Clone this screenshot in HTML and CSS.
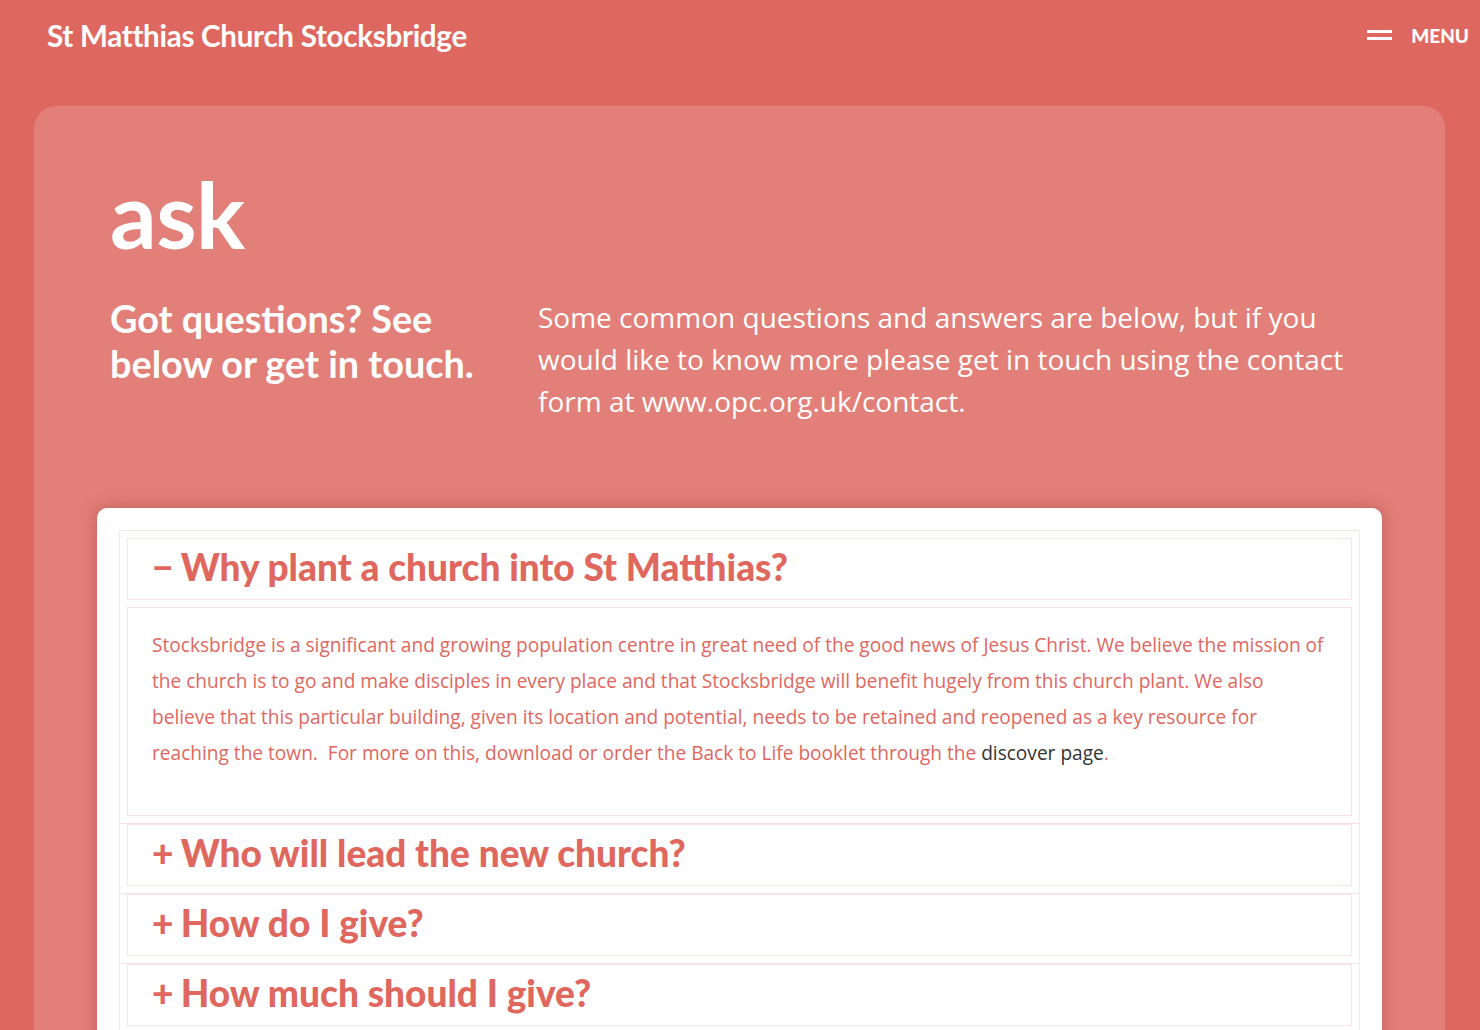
FILE: index.html
```html
<!DOCTYPE html>
<html lang="en">
<head>
<meta charset="utf-8">
<title>ask | St Matthias Church Stocksbridge</title>
<link rel="stylesheet" href="styles.css">
</head>
<body>
<header class="topbar">
  <a class="brand" href="#">St Matthias Church Stocksbridge</a>
  <a class="menu" href="#">
    <svg class="burger" width="25" height="10" viewBox="0 0 25 10" aria-hidden="true">
      <rect x="0" y="0" width="25" height="3" fill="#fff"/>
      <rect x="0" y="7" width="25" height="3" fill="#fff"/>
    </svg>
    <span>MENU</span>
  </a>
</header>

<main class="panel">
  <section class="intro">
    <h1 class="page-title">ask</h1>
    <div class="intro-row">
      <h2 class="lead">Got questions? See below or get in touch.</h2>
      <p class="intro-text">Some common questions and answers are below, but if you would like to know more please get in touch using the contact form at www.opc.org.uk/contact.</p>
    </div>
  </section>

  <section class="card">
    <div class="faq">
      <div class="item first">
        <div class="q"><h3><span class="sign">&minus;</span> Why plant a church into St Matthias?</h3></div>
        <div class="a">
          <p>Stocksbridge is a significant and growing population centre in great need of the good news of Jesus Christ. We believe the mission of the church is to go and make disciples in every place and that Stocksbridge will benefit hugely from this church plant. We also believe that this particular building, given its location and potential, needs to be retained and reopened as a key resource for reaching the town.&nbsp; For more on this, download or order the Back to Life booklet through the <a href="#">discover page</a>.</p>
        </div>
      </div>
      <div class="item">
        <div class="q"><h3><span class="sign">+</span> Who will lead the new church?</h3></div>
      </div>
      <div class="item">
        <div class="q"><h3><span class="sign">+</span> How do I give?</h3></div>
      </div>
      <div class="item">
        <div class="q"><h3><span class="sign">+</span> How much should I give?</h3></div>
      </div>
      <div class="item">
        <div class="q"><h3><span class="sign">+</span> Where will the church meet?</h3></div>
      </div>
    </div>
  </section>
</main>
</body>
</html>
```

FILE: styles.css
```css
* { box-sizing: border-box; }

html, body {
  margin: 0;
  padding: 0;
}

body {
  background: #de6860;
  font-family: "Lato", "Open Sans", sans-serif;
  color: #fff;
}

a { text-decoration: none; }

.topbar {
  display: flex;
  justify-content: space-between;
  align-items: center;
  height: 70px;
  padding: 0 11px 0 47px;
}

.brand {
  color: #fff;
  font-size: 29.6px;
  font-weight: 700;
  letter-spacing: -0.3px;
}

.menu {
  display: flex;
  align-items: center;
  gap: 19px;
  color: #fff;
  font-size: 19px;
  font-weight: 900;
}

.burger { display: block; }

.panel {
  margin: 36px 35px 0 34px;
  background: #e27f78;
  border-radius: 22px 22px 0 0;
  padding: 0 63px 60px;
}

.intro {
  padding: 58px 13px 0;
}

.page-title {
  margin: 0;
  font-size: 92px;
  font-weight: 700;
  line-height: 100px;
  letter-spacing: -0.5px;
}

.intro-row {
  display: grid;
  grid-template-columns: 402px 1fr;
  gap: 26px;
  margin-top: 32px;
}

.lead {
  margin: 0;
  max-width: 395px;
  font-size: 37.8px;
  font-weight: 700;
  line-height: 45px;
}

.intro-text {
  margin: 0;
  font-family: "Open Sans", "Lato", sans-serif;
  font-size: 28px;
  line-height: 42px;
  font-weight: 400;
}

.card {
  margin-top: 86px;
  background: #fff;
  border-radius: 10px;
  padding: 22px 22px 40px;
  box-shadow: 0 0 18px rgba(120, 40, 35, 0.35);
}

.faq {
  border: 1px solid #fae6e4;
  border-bottom: 0;
}

.item {
  border-top: 1px solid #f7e2e0;
  padding: 0 7px 7px;
}

.item.first {
  border-top: 0;
  padding-top: 7px;
}

.q {
  border: 1px solid #f9e6e4;
  padding: 8px 24px 12px;
}

.q h3 {
  margin: 0;
  color: #e0675e;
  font-size: 37px;
  line-height: 40px;
  font-weight: 900;
}

.sign {
  display: inline-block;
  width: 20px;
}

.a {
  margin-top: 7px;
  border: 1px solid #f7e3e1;
  padding: 19px 24px 44px;
}

.a p {
  margin: 0;
  color: #e0675e;
  font-family: "Open Sans", "Lato", sans-serif;
  font-size: 19.1px;
  line-height: 36px;
}

.a p a {
  color: #333;
}
```
